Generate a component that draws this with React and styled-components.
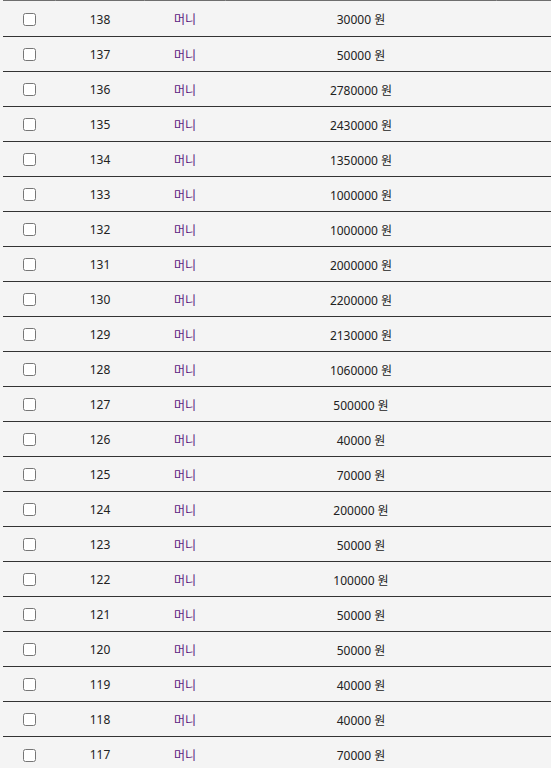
import React from 'react';
import styled, { createGlobalStyle } from 'styled-components';

const GlobalStyle = createGlobalStyle`
  html, body {
    margin: 0;
    padding: 0;
    background: #f4f4f4;
  }
  body {
    font-family: 'Noto Sans', 'Noto Sans CJK KR', sans-serif;
    color: #222;
  }
`;

const Wrapper = styled.div`
  padding-left: 3px;
`;

const Table = styled.table`
  width: 100%;
  border-collapse: collapse;
  table-layout: fixed;
  font-size: 12px;
`;

const HeadRow = styled.tr`
  line-height: 0;
  font-size: 0;
`;

const HeadCell = styled.th`
  height: 1px;
  padding: 0;
  background: #6e6e6e;
  border-left: 1px solid #8a8a8a;
  width: ${(p) => p.$w || 'auto'};

  &:first-child {
    border-left: none;
  }
`;

const Row = styled.tr`
  height: 35px;
  border-bottom: 1px solid #333;

  &:last-child {
    border-bottom: none;
  }
`;

const Cell = styled.td`
  padding: 2px 0 0;
  text-align: center;
  vertical-align: middle;
`;

const Check = styled.input.attrs({ type: 'checkbox' })`
  margin: 0;
  width: 13px;
  height: 13px;
  vertical-align: middle;
  position: relative;
  top: -1px;
`;

const Name = styled.a`
  color: #5a1a80;
  text-decoration: none;
`;

const rows = [
  [138, 30000],
  [137, 50000],
  [136, 2780000],
  [135, 2430000],
  [134, 1350000],
  [133, 1000000],
  [132, 1000000],
  [131, 2000000],
  [130, 2200000],
  [129, 2130000],
  [128, 1060000],
  [127, 500000],
  [126, 40000],
  [125, 70000],
  [124, 200000],
  [123, 50000],
  [122, 100000],
  [121, 50000],
  [120, 50000],
  [119, 40000],
  [118, 40000],
  [117, 70000],
];

const App = () => (
  <>
    <GlobalStyle />
    <Wrapper>
      <Table>
        <thead>
          <HeadRow>
            <HeadCell $w="52px" />
            <HeadCell $w="88px" />
            <HeadCell $w="80px" />
            <HeadCell $w="270px" />
            <HeadCell />
          </HeadRow>
        </thead>
        <tbody>
          {rows.map(([id, amount]) => (
            <Row key={id}>
              <Cell>
                <Check />
              </Cell>
              <Cell>{id}</Cell>
              <Cell>
                <Name href="#">머니</Name>
              </Cell>
              <Cell>{amount} 원</Cell>
              <Cell />
            </Row>
          ))}
        </tbody>
      </Table>
    </Wrapper>
  </>
);

export default App;
